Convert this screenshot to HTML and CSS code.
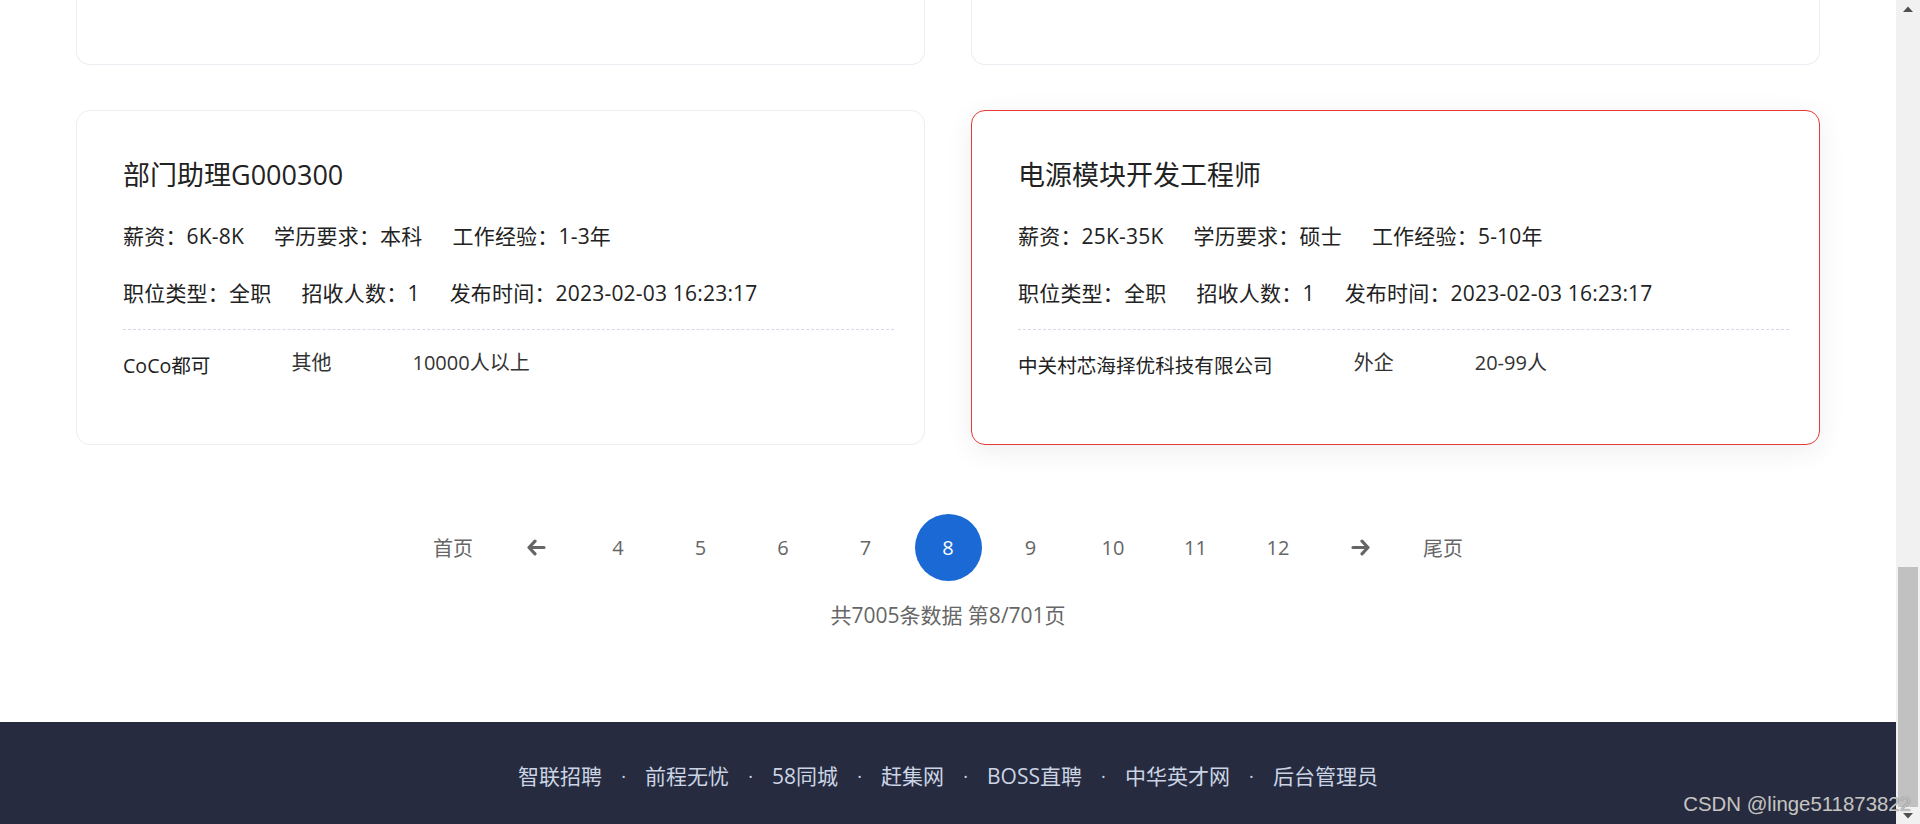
FILE: index.html
```html
<!DOCTYPE html>
<html lang="zh-CN">
<head>
<meta charset="utf-8">
<title>职位列表</title>
<link rel="stylesheet" href="styles.css">
</head>
<body>
<div class="viewport">
  <div class="page">
    <div class="jobs">
      <div class="card card-cut"></div>
      <div class="card card-cut"></div>

      <div class="card">
        <div class="job-title">部门助理G000300</div>
        <div class="job-row first">
          <span>薪资：6K-8K</span>
          <span>学历要求：本科</span>
          <span>工作经验：1-3年</span>
        </div>
        <div class="job-row">
          <span>职位类型：全职</span>
          <span>招收人数：1</span>
          <span>发布时间：2023-02-03 16:23:17</span>
        </div>
        <div class="divider"></div>
        <div class="company-row">
          <span class="company">CoCo都可</span>
          <span>其他</span>
          <span>10000人以上</span>
        </div>
      </div>

      <div class="card active">
        <div class="job-title">电源模块开发工程师</div>
        <div class="job-row first">
          <span>薪资：25K-35K</span>
          <span>学历要求：硕士</span>
          <span>工作经验：5-10年</span>
        </div>
        <div class="job-row">
          <span>职位类型：全职</span>
          <span>招收人数：1</span>
          <span>发布时间：2023-02-03 16:23:17</span>
        </div>
        <div class="divider"></div>
        <div class="company-row">
          <span class="company">中关村芯海择优科技有限公司</span>
          <span>外企</span>
          <span>20-99人</span>
        </div>
      </div>
    </div>

    <div class="pager">
      <span class="pg">首页</span>
      <span class="pg"><svg class="arrow" width="20" height="17" viewBox="0 0 20 17"><path d="M9 2.2 L3 8.5 L9 14.8 M3.6 8.5 H18" fill="none" stroke="#666" stroke-width="3.2" stroke-linecap="round" stroke-linejoin="round"/></svg></span>
      <span class="pg">4</span>
      <span class="pg">5</span>
      <span class="pg">6</span>
      <span class="pg">7</span>
      <span class="pg current">8</span>
      <span class="pg">9</span>
      <span class="pg">10</span>
      <span class="pg">11</span>
      <span class="pg">12</span>
      <span class="pg"><svg class="arrow" width="20" height="17" viewBox="0 0 20 17"><path d="M11 2.2 L17 8.5 L11 14.8 M16.4 8.5 H2" fill="none" stroke="#666" stroke-width="3.2" stroke-linecap="round" stroke-linejoin="round"/></svg></span>
      <span class="pg">尾页</span>
    </div>
    <div class="total">共7005条数据 第8/701页</div>

    <footer class="footer">
      <span class="link">智联招聘</span><span class="dot">·</span>
      <span class="link">前程无忧</span><span class="dot">·</span>
      <span class="link">58同城</span><span class="dot">·</span>
      <span class="link">赶集网</span><span class="dot">·</span>
      <span class="link">BOSS直聘</span><span class="dot">·</span>
      <span class="link">中华英才网</span><span class="dot">·</span>
      <span class="link">后台管理员</span>
    </footer>
  </div>

  <div class="scrollbar">
    <div class="sb-btn"><svg width="10" height="6" viewBox="0 0 10 6"><path d="M0 6 L5 0.5 L10 6 Z" fill="#505050"/></svg></div>
    <div class="sb-track"><div class="sb-thumb"></div></div>
    <div class="sb-btn"><svg width="10" height="6" viewBox="0 0 10 6"><path d="M0 0 L5 5.5 L10 0 Z" fill="#505050"/></svg></div>
  </div>
</div>
<div class="watermark">CSDN @linge511873822</div>
</body>
</html>
```

FILE: styles.css
```css
html, body {
  margin: 0;
  padding: 0;
  height: 824px;
  overflow: hidden;
  background: #ffffff;
}

body {
  position: relative;
  font-family: "Open Sans", "Noto Sans CJK SC", sans-serif;
  color: #333;
}

.viewport {
  display: flex;
  height: 824px;
}

.page {
  flex: 1;
  display: flex;
  flex-direction: column;
  min-width: 0;
}

.jobs {
  display: grid;
  grid-template-columns: 1fr 1fr;
  column-gap: 46px;
  row-gap: 45px;
  padding: 0 76px;
}

.card {
  border: 1px solid #ebedf3;
  border-radius: 14px;
  background: #fff;
  padding: 46px 30px 63px 46px;
}

.card-cut {
  padding: 0;
  border-top: none;
  border-top-left-radius: 0;
  border-top-right-radius: 0;
  box-sizing: border-box;
  height: 65px;
}

.card.active {
  border-color: #e53a35;
  box-shadow: 0 6px 28px rgba(0, 0, 0, 0.07);
}

.job-title {
  font-size: 27px;
  line-height: 36px;
  color: #222;
}

.job-row {
  display: flex;
  gap: 30px;
  font-size: 21px;
  line-height: 30px;
  letter-spacing: 0.2px;
  color: #222;
  margin-top: 27px;
}

.job-row.first {
  margin-top: 28px;
}

.divider {
  margin-top: 21px;
  border-top: 1px dashed #d3daea;
}

.company-row {
  display: flex;
  align-items: flex-start;
  gap: 81px;
  margin-top: 18px;
  font-size: 20px;
  line-height: 30px;
  color: #333;
}

.company {
  padding-top: 3px;
  font-size: 19.6px;
  color: #222;
}

.pager {
  display: flex;
  justify-content: center;
  gap: 15.5px;
  margin-top: 69px;
}

.pg {
  width: 67px;
  height: 67px;
  display: flex;
  align-items: center;
  justify-content: center;
  font-size: 20px;
  color: #666;
  border-radius: 50%;
}

.pg.current {
  background: #1a69d4;
  color: #fff;
}

.arrow {
  display: block;
}

.total {
  margin-top: 19px;
  text-align: center;
  font-size: 21px;
  line-height: 30px;
  color: #666;
}

.footer {
  margin-top: auto;
  height: 102px;
  box-sizing: border-box;
  padding-top: 39px;
  background: #262b3f;
  display: flex;
  justify-content: center;
  align-items: flex-start;
  gap: 19.5px;
  font-size: 21px;
  line-height: 30px;
  color: #cbd4e4;
}

.dot {
  width: 4px;
  display: flex;
  justify-content: center;
  font-size: 18px;
}

.scrollbar {
  width: 24px;
  flex: none;
  background: #f1f1f1;
  display: flex;
  flex-direction: column;
}

.sb-btn {
  height: 17px;
  display: flex;
  align-items: center;
  justify-content: center;
}

.sb-track {
  flex: 1;
  display: flex;
  flex-direction: column;
  justify-content: flex-end;
  padding: 0 2px;
}

.sb-thumb {
  height: 240px;
  background: #c1c1c1;
}

.watermark {
  position: absolute;
  right: 9px;
  bottom: 8px;
  font-family: "Liberation Sans", Arial, sans-serif;
  font-size: 20.4px;
  line-height: 24px;
  color: #c4c4c4;
  text-shadow: 0 0 1px rgba(60, 60, 60, 0.8);
}
```
